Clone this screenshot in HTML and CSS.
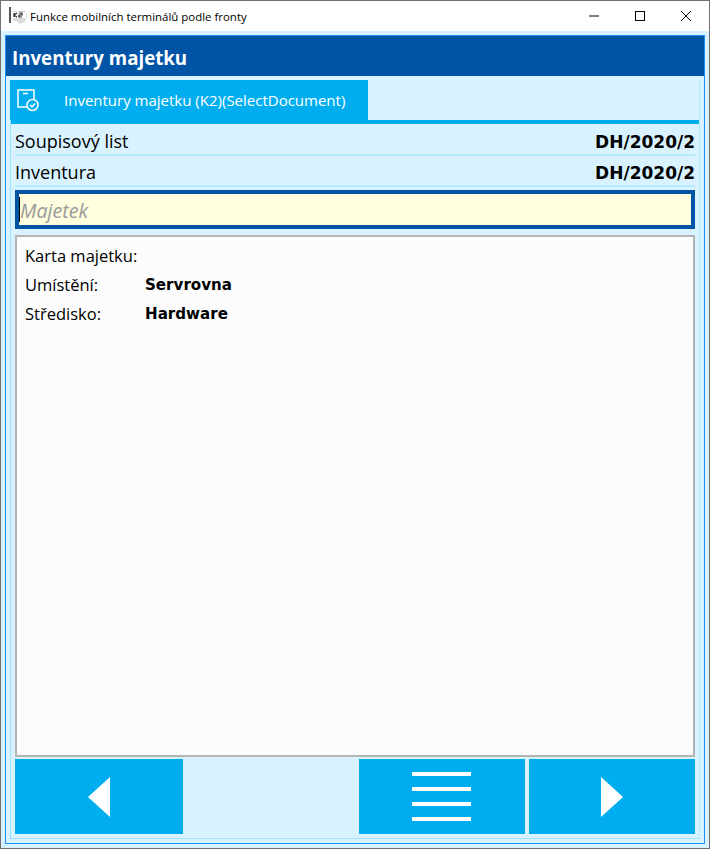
FILE: index.html
```html
<!DOCTYPE html>
<html lang="cs">
<head>
<meta charset="utf-8">
<title>Funkce mobilních terminálů podle fronty</title>
<link rel="stylesheet" href="styles.css">
</head>
<body>
<div class="window">
  <div class="titlebar">
    <svg class="app-icon" width="21" height="18" viewBox="0 0 21 18">
      <rect x="0" y="0" width="2" height="16" fill="#555"/>
      <path d="M4 4h13l1 5-2 6-5 2-4-3H4z" fill="#dcdcdc"/>
      <rect x="4" y="5" width="13" height="6" fill="#fff"/>
      <path d="M5 6v4M5 8l3-2M5 8l3 2M10 6h3v2h-3v2h3" stroke="#222" stroke-width="1.2" fill="none"/>
    </svg>
    <span class="title-text">Funkce mobilních terminálů podle fronty</span>
    <div class="controls">
      <svg width="46" height="30" viewBox="0 0 46 30"><path d="M18 15h10" stroke="#000"/></svg>
      <svg width="46" height="30" viewBox="0 0 46 30"><rect x="18.5" y="10.5" width="9" height="9" fill="none" stroke="#000"/></svg>
      <svg width="46" height="30" viewBox="0 0 46 30"><path d="M18 10l10 10M28 10L18 20" stroke="#000" fill="none"/></svg>
    </div>
  </div>
  <div class="client">
    <div class="frame">
      <header class="app-header">Inventury majetku</header>
      <div class="content">
        <div class="tabs">
          <div class="tab">
            <svg class="tab-icon" width="24" height="24" viewBox="0 0 24 24">
              <path d="M12 19H2V2h16v10" fill="none" stroke="#fff" stroke-width="1.5"/>
              <path d="M7 5.5h5" stroke="#fff" stroke-width="1.5"/>
              <circle cx="16.500" cy="17" r="5.500" fill="none" stroke="#fff" stroke-width="1.5"/>
              <path d="M14 17l2 2 3-3.500" fill="none" stroke="#fff" stroke-width="1.5"/>
            </svg>
            <span class="tab-label">Inventury majetku (K2)(SelectDocument)</span>
          </div>
        </div>
        <div class="rows">
          <div class="row"><span>Soupisový list</span><b>DH/2020/2</b></div>
          <div class="row"><span>Inventura</span><b>DH/2020/2</b></div>
        </div>
        <div class="input"><span class="caret"></span><span class="placeholder">Majetek</span></div>
        <div class="panel">
          <div class="info"><span class="info-label">Karta majetku:</span></div>
          <div class="info"><span class="info-label">Umístění:</span><b>Servrovna</b></div>
          <div class="info"><span class="info-label">Středisko:</span><b>Hardware</b></div>
        </div>
        <div class="buttons">
          <div class="btn btn-left">
            <svg width="22" height="40" viewBox="0 0 22 40"><path d="M22 0v40L0 20z" fill="#fff"/></svg>
          </div>
          <div class="btn btn-menu">
            <svg width="60" height="49" viewBox="0 0 60 49" fill="#fff">
              <rect y="0" width="59" height="4"/><rect y="15" width="59" height="4"/><rect y="30" width="59" height="4"/><rect y="45" width="59" height="4"/>
            </svg>
          </div>
          <div class="btn btn-right">
            <svg width="22" height="40" viewBox="0 0 22 40"><path d="M0 0v40l22-20z" fill="#fff"/></svg>
          </div>
        </div>
      </div>
    </div>
  </div>
</div>
</body>
</html>
```
FILE: styles.css
```css
* { box-sizing: border-box; }
html, body { margin: 0; padding: 0; }
body { width: 710px; height: 849px; overflow: hidden; font-family: "Open Sans", "Noto Sans", sans-serif; color: #000; }
.window { width: 710px; height: 849px; border: 1px solid #707070; display: flex; flex-direction: column; background: #d9f2ff; }
.titlebar { height: 30px; flex: none; background: #fff; display: flex; align-items: center; padding-left: 8px; }
.app-icon { flex: none; }
.title-text { font-size: 11.45px; white-space: nowrap; flex: 1; }
.controls { display: flex; }
.controls svg { display: block; }
.client { flex: 1; padding: 4px; min-height: 0; display: flex; }
.frame { flex: 1; border: 1px solid #1e90ff; display: flex; flex-direction: column; min-width: 0; }
.app-header { height: 40px; flex: none; background: #0054a6; color: #fff; font-weight: 700; font-size: 18.7px; line-height: 44px; padding-left: 6px; }
.content { flex: 1; margin: 4px; border-left: 1px solid #99e3ff; border-bottom: 1px solid #99e3ff; border-right: 1px solid #b8ebff; display: flex; flex-direction: column; min-height: 0; }
.tabs { height: 44px; flex: none; border-bottom: 4px solid #00aeef; display: flex; }
.tab { width: 358px; background: #00aeef; color: #fff; display: flex; align-items: center; margin-left: -1px; }
.tab-icon { margin-left: 6px; flex: none; }
.tab-label { font-size: 15px; margin-left: 24px; white-space: nowrap; }
.rows { flex: none; margin-left: 4px; padding: 1px 4px 0 0; }
.row { height: 31px; padding-top: 2px; display: flex; justify-content: space-between; align-items: center; font-size: 18px; border-bottom: 2px solid #b8eaff; }
.row b { font-family: "DejaVu Sans", sans-serif; font-size: 17px; font-weight: 700; margin-top: 2px; }
.input { flex: none; height: 39px; margin: 3px 4px 0; border: 4px solid #0054a6; background: #ffffdf; display: flex; align-items: center; }
.caret { width: 1px; height: 25px; background: #000; flex: none; }
.placeholder { font-style: italic; font-size: 19.6px; color: #999; margin-top: 2px; }
.panel { flex: 1; margin: 6px 4px 2px; border: 2px solid #b4b4b4; background: #fcfcfc; padding: 4px 8px 0; min-height: 0; }
.info { height: 29px; display: flex; align-items: center; font-size: 16.5px; }
.info-label { width: 120px; flex: none; white-space: nowrap; }
.info b { font-family: "DejaVu Sans", sans-serif; font-size: 15.1px; font-weight: 700; }
.buttons { flex: none; height: 75px; margin: 0 4px 4px; display: flex; gap: 4px; }
.btn { background: #00aeef; display: flex; align-items: center; justify-content: center; }
.btn-left { width: 168px; margin-right: 172px; }
.btn-menu { width: 166px; }
.btn-right { width: 166px; }
.btn svg { display: block; }
```
